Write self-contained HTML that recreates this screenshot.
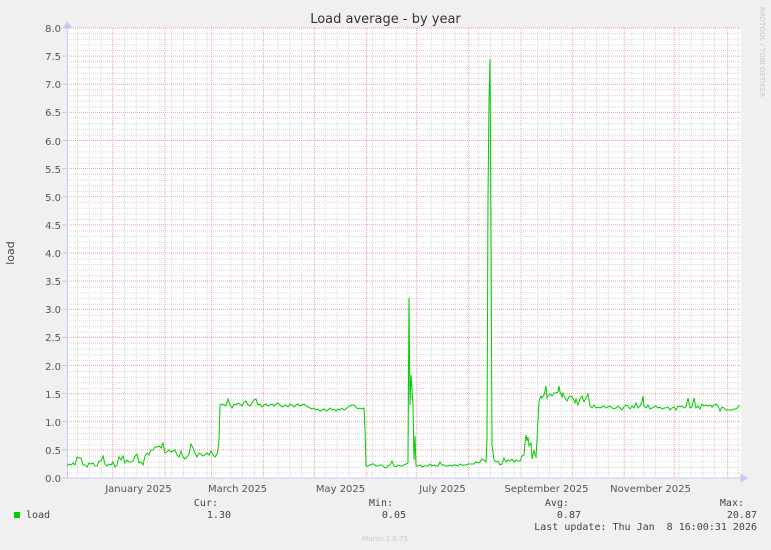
<!DOCTYPE html>
<html><head><style>
html,body{margin:0;padding:0;background:#f0f0f0;}
svg{display:block;font-family:"DejaVu Sans","Liberation Sans",sans-serif;}
.m{font-family:"DejaVu Sans Mono","Liberation Mono",monospace;font-size:10px;fill:#444;}
.y{font-size:10px;fill:#555;text-anchor:end;}
.x{font-size:10px;fill:#555;text-anchor:middle;}
</style></head><body>
<svg width="771" height="550" viewBox="0 0 771 550" xmlns="http://www.w3.org/2000/svg">
<rect width="771" height="550" fill="#f0f0f0"/>
<rect x="67" y="28" width="674" height="450" fill="#fff"/>
<g stroke="#d8d8d8" stroke-width="1" stroke-dasharray="1,1" id="minor">
<path d="M67 33.6H741M67 39.3H741M67 44.9H741M67 50.5H741M67 61.8H741M67 67.4H741M67 73.1H741M67 78.7H741M67 89.9H741M67 95.6H741M67 101.2H741M67 106.9H741M67 118.1H741M67 123.8H741M67 129.4H741M67 135.1H741M67 146.3H741M67 151.9H741M67 157.6H741M67 163.2H741M67 174.4H741M67 180.1H741M67 185.7H741M67 191.4H741M67 202.6H741M67 208.3H741M67 213.9H741M67 219.6H741M67 230.8H741M67 236.4H741M67 242.1H741M67 247.7H741M67 258.9H741M67 264.6H741M67 270.2H741M67 275.9H741M67 287.1H741M67 292.8H741M67 298.4H741M67 304.1H741M67 315.3H741M67 320.9H741M67 326.6H741M67 332.2H741M67 343.4H741M67 349.1H741M67 354.7H741M67 360.4H741M67 371.6H741M67 377.3H741M67 382.9H741M67 388.6H741M67 399.8H741M67 405.4H741M67 411.1H741M67 416.7H741M67 427.9H741M67 433.6H741M67 439.2H741M67 444.9H741M67 456.1H741M67 461.8H741M67 467.4H741M67 473.1H741"/>
<path d="M77.5 28V478M89.3 28V478M101.1 28V478M124.5 28V478M136.3 28V478M148.1 28V478M159.9 28V478M171.7 28V478M183.5 28V478M195.3 28V478M207.1 28V478M230.7 28V478M242.5 28V478M254.3 28V478M278 28V478M289.8 28V478M301.6 28V478M325.2 28V478M337 28V478M348.8 28V478M372.4 28V478M384.2 28V478M396 28V478M407.8 28V478M431.4 28V478M443.2 28V478M455 28V478M478.6 28V478M490.4 28V478M502.2 28V478M514 28V478M537.6 28V478M549.4 28V478M561.2 28V478M584.8 28V478M596.6 28V478M608.4 28V478M632 28V478M643.8 28V478M655.6 28V478M679.2 28V478M691 28V478M702.8 28V478M714.6 28V478M738.2 28V478"/>
</g>
<g stroke="#f0a0a0" stroke-width="1" stroke-dasharray="1,1">
<path d="M67 28H741M67 56.1H741M67 84.3H741M67 112.4H741M67 140.5H741M67 168.6H741M67 196.8H741M67 224.9H741M67 253H741M67 281.1H741M67 309.3H741M67 337.4H741M67 365.5H741M67 393.6H741M67 421.8H741M67 449.9H741"/>
<path d="M112.7 28V478M165 28V478M211.7 28V478M263.3 28V478M314.3 28V478M366.7 28V478M416.7 28V478M468.5 28V478M521 28V478M572.3 28V478M624.3 28V478M674.3 28V478M727.7 28V478"/>
</g>
<g stroke="#c8c8f0" stroke-width="1" fill="#c8c8f0">
<path d="M67 478H744M67.5 24V478" />
<path d="M741 474L747 478L741 482Z"/>
<path d="M63.5 28L67.5 22L71.5 28Z"/>
</g>
<g stroke="#888" stroke-width="1">
<path d="M62 478H67M62 449.9H67M62 421.8H67M62 393.6H67M62 365.5H67M62 337.4H67M62 309.3H67M62 281.1H67M62 253H67M62 224.9H67M62 196.8H67M62 168.6H67M62 140.5H67M62 112.4H67M62 84.3H67M62 56.1H67M62 28H67" stroke="#ccc"/>
</g>
<polyline fill="none" stroke="#00cc00" stroke-width="1" points="
67,466 69,464 71,465 73,463 75,465 77,457 79,458 81,458 83,465 85,465 87,467 89,463 91,464 93,463 95,466 97,466 99,461 101,461 103,456 105,464 107,466 109,464 111,465 113,462 115,467 117,465 119,457 121,460 123,456 125,463 127,460 129,462 131,462 133,461 135,456 137,454 139,463 141,462 143,465 145,456 147,453 149,455 151,450 153,450 155,447 157,447 159,446 161,448 163,443 165,453 167,452 169,450 171,452 173,451 175,450 177,455 179,457 181,451 183,457 185,459 187,457 189,454 191,444 193,448 195,453 197,457 199,453 201,454 203,456 205,455 207,453 209,455 211,451 213,455 215,457 217,454 218,450 219,440 220,405 222,404 224,405 226,406 228,399 230,405 232,408 234,404 236,405 238,403 240,404 242,406 244,402 246,401 248,405 250,406 252,403 254,400 256,399 258,405 260,404 262,407 264,405 266,404 268,406 270,405 272,404 274,406 276,404 278,403 280,405 282,407 284,406 286,405 288,407 290,404 292,405 294,407 296,405 298,404 300,406 302,405 304,404 306,406 308,407 310,408 312,409 314,408 316,410 318,409 320,411 322,410 324,409 326,411 328,410 330,408 332,410 334,409 336,411 338,409 340,410 342,408 344,410 346,409 348,407 350,406 352,405 354,405 356,407 358,409 360,408 362,409 364,408 365,430 366,466 368,466 370,465 372,464 374,464 376,466 378,466 380,465 382,465 384,467 386,468 388,466 390,465 392,461 394,466 396,467 398,465 400,466 402,466 404,465 406,464 408,463 409,298 410,405 411,375 412,390 413,405 414,460 415,436 416,466 418,466 420,465 422,467 424,466 426,466 428,466 430,464 432,466 434,465 436,466 438,466 440,462 442,465 444,465 446,466 448,466 450,465 452,466 454,465 456,465 458,466 460,464 462,465 464,465 466,465 468,464 470,464 472,464 474,464 476,462 478,463 480,462 482,459 484,460 486,462 487,440 488,200 489,100 490,59 491,233 492,445 494,460 496,462 498,461 500,465 502,464 504,458 506,462 508,460 510,461 512,459 514,462 516,460 518,461 520,461 522,456 524,455 525,443 526,435 527,441 528,437 529,446 531,443 532,459 534,450 535,455 536,457 537,440 538,420 539,402 540,398 541,396 542,398 544,395 545,391 546,386 547,398 548,396 550,394 552,396 554,393 556,393 558,392 559,386 560,392 562,397 563,393 565,398 567,401 569,397 571,396 573,398 575,403 576,399 578,405 580,399 582,396 584,402 586,398 588,394 590,406 592,408 594,405 596,408 598,407 600,408 602,407 604,406 606,408 608,407 610,406 612,408 614,409 616,408 618,406 620,408 622,410 624,407 626,405 628,406 630,409 632,406 634,408 636,403 638,408 640,406 642,402 643,396 644,406 646,408 648,405 650,409 652,408 654,407 656,406 658,408 660,407 662,409 664,408 666,408 668,407 670,410 672,408 674,407 676,410 678,406 680,407 682,406 684,408 686,407 688,398 690,408 692,407 694,398 696,408 698,406 700,409 702,404 704,406 706,405 708,406 710,405 712,407 714,405 716,404 718,406 720,411 722,407 724,408 726,410 728,410 730,410 732,410 734,409 736,409 738,407 740,405"/>
<text x="385.5" y="23" text-anchor="middle" font-size="13" fill="#333">Load average - by year</text>
<g class="y">
<text x="61" y="482">0.0</text><text x="61" y="454">0.5</text><text x="61" y="426">1.0</text><text x="61" y="398">1.5</text><text x="61" y="370">2.0</text><text x="61" y="341">2.5</text><text x="61" y="313">3.0</text><text x="61" y="285">3.5</text><text x="61" y="257">4.0</text><text x="61" y="229">4.5</text><text x="61" y="201">5.0</text><text x="61" y="173">5.5</text><text x="61" y="145">6.0</text><text x="61" y="116">6.5</text><text x="61" y="88">7.0</text><text x="61" y="60">7.5</text><text x="61" y="32">8.0</text>
</g>
<g class="x">
<text x="138.5" y="492">January 2025</text><text x="237.5" y="492">March 2025</text><text x="340.5" y="492">May 2025</text><text x="442.5" y="492">July 2025</text><text x="546.5" y="492">September 2025</text><text x="650.5" y="492">November 2025</text>
</g>
<text transform="translate(14,253) rotate(-90)" text-anchor="middle" font-size="11" fill="#444">load</text>
<text transform="translate(760,52) rotate(90)" text-anchor="middle" font-size="7" fill="#c8c8c8">RRDTOOL / TOBI OETIKER</text>
<rect x="14" y="512" width="6" height="6" fill="#00cc00"/>
<text class="m" x="26" y="518">load</text>
<text class="m" x="218" y="506" text-anchor="end">Cur:</text>
<text class="m" x="231" y="518" text-anchor="end">1.30</text>
<text class="m" x="393" y="506" text-anchor="end">Min:</text>
<text class="m" x="406" y="518" text-anchor="end">0.05</text>
<text class="m" x="569" y="506" text-anchor="end">Avg:</text>
<text class="m" x="581" y="518" text-anchor="end">0.87</text>
<text class="m" x="744" y="506" text-anchor="end">Max:</text>
<text class="m" x="757" y="518" text-anchor="end">20.87</text>
<text class="m" x="757" y="530" text-anchor="end" xml:space="preserve">Last update: Thu Jan  8 16:00:31 2026</text>
<text x="385" y="541" text-anchor="middle" font-size="7" fill="#c8c8c8">Munin 2.0.75</text>
</svg>
</body></html>
